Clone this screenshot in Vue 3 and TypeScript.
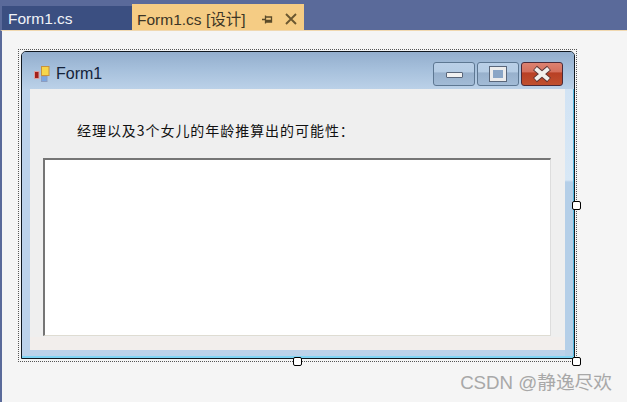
<script setup lang="ts">
const message: string = '经理以及3个女儿的年龄推算出的可能性：'
const handles: string[] = ['h-right', 'h-bottom', 'h-corner']
</script>

<template>
  <div class="page">
    <div class="tabbar">
      <div class="tab">Form1.cs</div>
      <div class="tab active">
        <span class="tab-text">Form1.cs [设计]</span>
        <svg class="pin" width="11" height="11" viewBox="0 0 11 11">
          <path d="M0 5.5H3M3.5 1.5V9.5M3.5 3H9.5V8H3.5M3.5 6.5H9.5" fill="none" stroke="#5a4a28" stroke-width="1.3" />
        </svg>
        <svg class="close" width="14" height="14" viewBox="0 0 14 14">
          <path d="M2 2L12 12M12 2L2 12" stroke="#6b5730" stroke-width="1.9" />
        </svg>
      </div>
    </div>
    <div class="canvas">
      <div class="selection">
        <div class="window">
          <div class="titlebar">
            <svg class="app-icon" width="18" height="18" viewBox="0 0 18 18">
              <rect x="1.5" y="6.5" width="4.5" height="7" fill="#a31f1a" stroke="#d9a0a0" />
              <rect x="8.5" y="1.5" width="7.5" height="9" fill="#f7d64a" stroke="#c8923c" />
              <rect x="8.5" y="11.5" width="5.5" height="5" fill="#7ba6e0" stroke="#8c9dc0" />
            </svg>
            <span class="title">Form1</span>
            <div class="controls">
              <div class="ctrl">
                <span class="min-glyph"></span>
              </div>
              <div class="ctrl">
                <span class="max-glyph"></span>
              </div>
              <div class="ctrl ctrl-close">
                <svg width="22" height="18" viewBox="0 0 22 18">
                  <path d="M4 3L18 15M18 3L4 15" stroke="#5a3434" stroke-width="6" />
                  <path d="M4.5 3.5L17.5 14.5M17.5 3.5L4.5 14.5" stroke="#f1efec" stroke-width="4.2" />
                </svg>
              </div>
            </div>
          </div>
          <div class="client">
            <div class="label">{{ message }}</div>
            <div class="textbox"></div>
          </div>
        </div>
        <span v-for="h in handles" :key="h" class="handle" :class="h"></span>
      </div>
      <div class="watermark">CSDN @静逸尽欢</div>
    </div>
  </div>
</template>

<style>
html, body { margin: 0; padding: 0; background: #f5f5f5; }
</style>

<style scoped>
.page {
  position: relative;
  width: 627px;
  height: 402px;
  overflow: hidden;
  display: flex;
  flex-direction: column;
  background: #f5f5f5;
  font-family: "Liberation Sans", "Noto Sans CJK SC", sans-serif;
}
.tabbar {
  height: 30px;
  flex: none;
  box-sizing: border-box;
  padding: 4px 0 0 2px;
  display: flex;
  align-items: flex-start;
  background: #5a6a9a;
}
.tab {
  width: 130px;
  height: 25px;
  margin-top: 2px;
  box-sizing: border-box;
  padding: 0 0 0 6px;
  display: flex;
  align-items: center;
  background: #3b4f81;
  color: #f1f3f8;
  font-size: 15.5px;
}
.tab.active {
  width: 172px;
  height: 27px;
  margin-top: 0;
  padding-left: 5px;
  background: #f5cc84;
  color: #3c3525;
}
.tab-text { width: 125px; white-space: nowrap; }
.pin { flex: none; margin-top: 3px; }
.close { flex: none; margin-left: 11px; margin-top: 3px; }
.canvas {
  flex: 1;
  position: relative;
  border-left: 2px solid #5a6a9a;
  border-top: 1px solid #f0d8b0;
  background: #f5f5f5;
  padding: 18px 0 0 16px;
}
.selection {
  position: relative;
  box-sizing: border-box;
  width: 559px;
  height: 313px;
  padding: 1px 2px 2px 2px;
  border: 1px dotted #555;
}
.window {
  box-sizing: border-box;
  width: 554px;
  height: 308px;
  display: flex;
  flex-direction: column;
  border: 1px solid #101820;
  border-radius: 5px 5px 0 0;
  background:
    linear-gradient(180deg, #cfe1f3 0, #d8e8f6 128px, #b5cfe8 130px) right top / 9px 100% no-repeat,
    #bcd2ea;
  box-shadow: inset 0 -2px 0 #7fd4f4, inset -1px 0 0 #4fb8e0;
}
.titlebar {
  box-sizing: border-box;
  height: 37px;
  flex: none;
  display: flex;
  align-items: center;
  padding: 6px 11px 0 11px;
  background: linear-gradient(180deg, #93aecd 0, #a5bfdb 45%, #bbd1e8 100%);
  border-radius: 4px 4px 0 0;
}
.app-icon { flex: none; }
.title {
  margin-left: 5px;
  font-size: 16px;
  color: #14233a;
}
.controls {
  margin-left: auto;
  display: flex;
  gap: 2px;
}
.ctrl {
  box-sizing: border-box;
  width: 42px;
  height: 24px;
  display: flex;
  align-items: center;
  justify-content: center;
  border: 1px solid #5d7792;
  border-radius: 3px;
  background: linear-gradient(180deg, #b9cfe7 0, #b5cce4 42%, #97b0cc 44%, #a2bbd6 100%);
}
.ctrl-close {
  border-color: #4a2a38;
  background: linear-gradient(180deg, #dd8270 0, #d46f5c 42%, #b83f24 44%, #c0502f 100%);
}
.min-glyph {
  display: block;
  box-sizing: border-box;
  width: 17px;
  height: 6px;
  margin-top: 3px;
  background: #f1f1f1;
  border: 1px solid #59667a;
  border-radius: 1px;
}
.max-glyph {
  display: block;
  box-sizing: border-box;
  width: 16px;
  height: 14px;
  background: #8ba6c6;
  border: 3px solid #ececec;
  outline: 1px solid #59667a;
  outline-offset: 0;
}
.client {
  box-sizing: border-box;
  width: 535px;
  height: 261px;
  margin-left: 8px;
  padding: 32px 14px 0 13px;
  display: flex;
  flex-direction: column;
  background: linear-gradient(180deg, #efefef 0, #efefef 95%, #f2eeec 95%);
}
.label {
  height: 37px;
  padding-left: 34px;
  font-size: 14px;
  letter-spacing: 0.95px;
  line-height: 18px;
  color: #111;
  white-space: nowrap;
  font-family: "Noto Sans CJK SC", sans-serif;
}
.textbox {
  box-sizing: border-box;
  width: 508px;
  height: 178px;
  background: #fff;
  border-style: solid;
  border-width: 2px 1px 1px 2px;
  border-color: #757575 #dddddd #dfdcd2 #757575;
}
.handle {
  position: absolute;
  box-sizing: border-box;
  width: 9px;
  height: 9px;
  background: #fff;
  border: 1px solid #000;
  border-radius: 2px;
}
.h-right { right: -5px; top: 151px; }
.h-bottom { left: 274px; bottom: -5px; }
.h-corner { right: -5px; bottom: -5px; }
.watermark {
  position: absolute;
  right: 15px;
  bottom: 8px;
  font-size: 18.7px;
  color: #a8a8a8;
  white-space: nowrap;
}
</style>
